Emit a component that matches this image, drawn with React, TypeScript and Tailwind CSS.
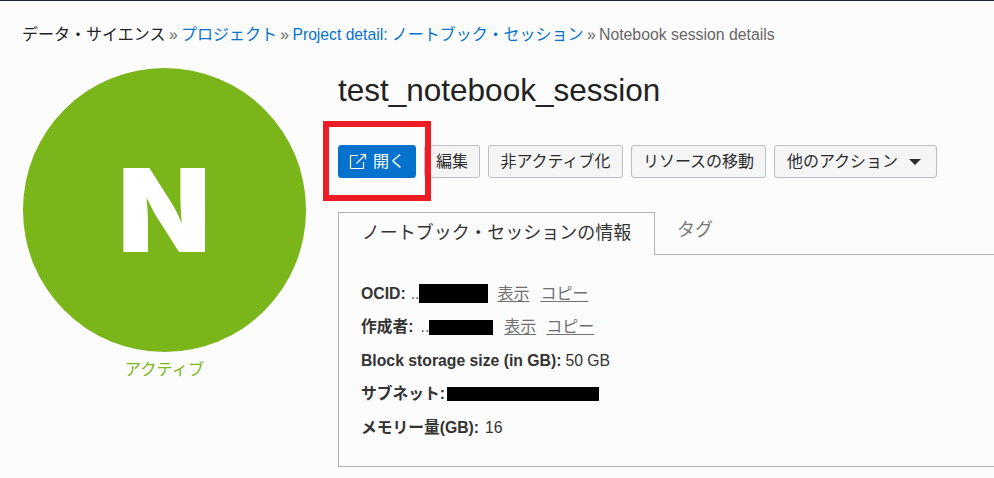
import React from 'react';

const FONT = "font-['Liberation_Sans','Noto_Sans_CJK_JP',sans-serif]";

const ActionButton: React.FC<{ children: React.ReactNode; className?: string }> = ({
  children,
  className = 'border-[#bcbec6] bg-[#f5f5f6] text-[#2b2b2b]',
}) => (
  <button className={`h-[33px] rounded-[3px] border text-[16px] flex items-center justify-center ${className}`}>
    {children}
  </button>
);

const Redacted: React.FC<{ className: string }> = ({ className }) => (
  <span className={`inline-block bg-black ${className}`}></span>
);

const TextLink: React.FC<{ children: React.ReactNode }> = ({ children }) => (
  <a className="text-[16px] text-[#6f6f6f] underline underline-offset-2">{children}</a>
);

const Sep = () => <span className="mx-[-1px] text-[15.7px]"> » </span>;

export default function App() {
  return (
    <div className={`relative w-[994px] h-[478px] overflow-hidden bg-[#fcfcfc] border-t border-[#1a2530] ${FONT}`}>
      {/* Breadcrumb */}
      <nav className="pl-[22px] pt-[22px] h-[67px] text-[16px] leading-[24px] whitespace-nowrap text-[#666666]">
        <span className="text-[#222222]">データ・サイエンス</span>
        <Sep />
        <a className="text-[#0572ce]">プロジェクト</a>
        <Sep />
        <a className="text-[#0572ce]">
          <span className="text-[15.7px]">Project detail: </span>ノートブック・セッション
        </a>
        <Sep />
        <span className="text-[15.8px]">Notebook session details</span>
      </nav>

      <div className="flex items-start pl-[23px]">
        {/* Avatar */}
        <div className="w-[283px] shrink-0 flex flex-col items-center">
          <div className="w-[283px] h-[284px] rounded-full bg-[#7ab51a] flex items-center justify-center">
            <span className="font-['Inter',sans-serif] text-[#ffffff] text-[115px] leading-none font-black scale-x-105">N</span>
          </div>
          <div className="mt-[5px] text-[16.3px] leading-[24px] text-[#7ab51a]">アクティブ</div>
        </div>

        <div className="ml-[32px] flex-1 min-w-0">
          <h1 className="text-[31.5px] leading-[44px] text-[#222222]">test_notebook_session</h1>

          {/* Actions */}
          <div className="flex gap-[8px] mt-[33px]">
            <ActionButton className="w-[78px] gap-[6px] bg-[#0572ce] border-[#0572ce] text-[#ffffff]">
              <svg width="18" height="17" viewBox="0 0 18 17" fill="none" stroke="#ffffff" strokeWidth="1.2">
                <path d="M9 2.5H1.5V15.5H14.5V9" />
                <path d="M7.5 10.5L16 2M11.5 1.5H16.5V6.5" />
              </svg>
              <span>開く</span>
            </ActionButton>
            <ActionButton className="w-[56px] border-[#bcbec6] bg-[#f5f5f6] text-[#2b2b2b]">編集</ActionButton>
            <ActionButton className="w-[135px] border-[#bcbec6] bg-[#f5f5f6] text-[#2b2b2b]">非アクティブ化</ActionButton>
            <ActionButton className="w-[135px] border-[#bcbec6] bg-[#f5f5f6] text-[#2b2b2b]">リソースの移動</ActionButton>
            <ActionButton className="w-[163px] gap-[11px] pr-[3px] border-[#bcbec6] bg-[#f5f5f6] text-[#2b2b2b]">
              <span>他のアクション</span>
              <span className="w-0 h-0 border-x-[6px] border-x-transparent border-t-[6px] border-t-[#2b2b2b]"></span>
            </ActionButton>
          </div>

          {/* Tabs */}
          <div className="flex mt-[34px] h-[43px] relative z-10">
            <div className="w-[317px] h-[43px] pb-[2px] border border-b-0 border-[#b3b3b3] bg-[#fcfcfc] flex items-center justify-center text-[18px] text-[#333333]">
              ノートブック・セッションの情報
            </div>
            <div className="flex-1 border-b border-[#b3b3b3]">
              <div className="w-[80px] h-[37px] flex items-center justify-center text-[18px] text-[#777777]">タグ</div>
            </div>
          </div>

          {/* Details panel */}
          <div className="-mt-px h-[213px] w-[700px] border border-[#b3b3b3] pt-[22px] pl-[22px] text-[15.75px] text-[#333333]">
            <div className="flex flex-col">
              <div className="h-[33.5px] flex items-center whitespace-nowrap">
                <b>OCID:</b>
                <span className="ml-[5px] text-[#666666]">..</span>
                <Redacted className="w-[69px] h-[19px]" />
                <span className="ml-[9px]"><TextLink>表示</TextLink></span>
                <span className="ml-[11px]"><TextLink>コピー</TextLink></span>
              </div>
              <div className="h-[33.5px] flex items-center whitespace-nowrap">
                <b>作成者:</b>
                <span className="ml-[7px] text-[#666666]">..</span>
                <Redacted className="w-[64px] h-[15px]" />
                <span className="ml-[11px]"><TextLink>表示</TextLink></span>
                <span className="ml-[10px]"><TextLink>コピー</TextLink></span>
              </div>
              <div className="h-[33.5px] flex items-center whitespace-nowrap">
                <b>Block storage size (in GB):</b>
                <span className="ml-[4px]">50 GB</span>
              </div>
              <div className="h-[33.5px] flex items-center whitespace-nowrap">
                <b>サブネット:</b>
                <Redacted className="ml-[2px] w-[152px] h-[14px]" />
              </div>
              <div className="h-[33.5px] flex items-center whitespace-nowrap">
                <b>メモリー量(GB):</b>
                <span className="ml-[6px]">16</span>
              </div>
            </div>
          </div>
        </div>
      </div>

      {/* Annotation drawn over the screenshot */}
      <div className="absolute left-[323px] top-[120px] w-[108px] h-[80px] border-[6px] border-[#ed1c24] z-20"></div>
    </div>
  );
}
